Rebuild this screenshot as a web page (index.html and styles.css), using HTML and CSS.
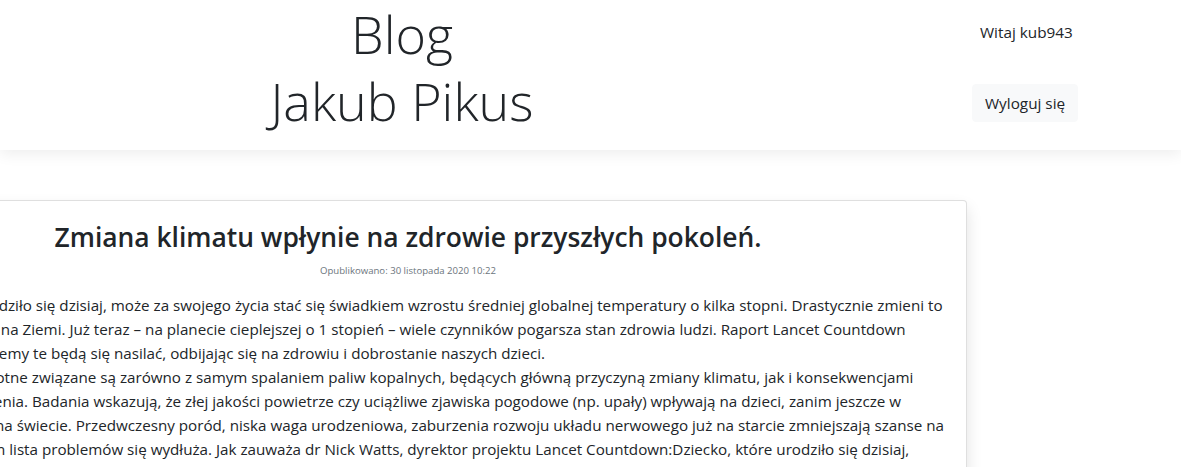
FILE: index.html
```html
<!DOCTYPE html>
<html lang="pl">
<head>
<meta charset="utf-8">
<title>Blog Jakub Pikus</title>
<link rel="stylesheet" href="styles.css">
</head>
<body>
<header class="site-header">
  <div class="brand">
    <h1 class="brand-title">Blog<br>Jakub Pikus</h1>
  </div>
  <div class="user-panel">
    <span class="greeting">Witaj kub943</span>
    <button class="btn-logout" type="button">Wyloguj się</button>
  </div>
</header>
<main class="content">
  <article class="post-card">
    <h3 class="post-title">Zmiana klimatu wpłynie na zdrowie przyszłych pokoleń.</h3>
    <p class="post-meta">Opublikowano: 30 listopada 2020 10:22</p>
    <p class="post-body">
      <span class="line">Dziecko, które urodziło się dzisiaj, może za swojego życia stać się świadkiem wzrostu średniej globalnej temperatury o kilka stopni. Drastycznie zmieni to</span>
      <span class="line">sposób życia ludzi na Ziemi. Już teraz – na planecie cieplejszej o 1 stopień – wiele czynników pogarsza stan zdrowia ludzi. Raport Lancet Countdown</span>
      <span class="line">pokazuje, że problemy te będą się nasilać, odbijając się na zdrowiu i dobrostanie naszych dzieci.</span>
      <span class="line">Zagrożenia zdrowotne związane są zarówno z samym spalaniem paliw kopalnych, będących główną przyczyną zmiany klimatu, jak i konsekwencjami</span>
      <span class="line">globalnego ocieplenia. Badania wskazują, że złej jakości powietrze czy uciążliwe zjawiska pogodowe (np. upały) wpływają na dzieci, zanim jeszcze w</span>
      <span class="line">ogóle pojawią się na świecie. Przedwczesny poród, niska waga urodzeniowa, zaburzenia rozwoju układu nerwowego już na starcie zmniejszają szanse na</span>
      <span class="line">zdrowie, i z czasem lista problemów się wydłuża. Jak zauważa dr Nick Watts, dyrektor projektu Lancet Countdown:Dziecko, które urodziło się dzisiaj,</span>
      <span class="line">może za swojego życia stać się świadkiem wzrostu średniej globalnej temperatury o kilka stopni.</span>
    </p>
  </article>
</main>
</body>
</html>
```

FILE: styles.css
```css
html, body {
  margin: 0;
  padding: 0;
  background: #fff;
}

body {
  font-family: "Open Sans", "Noto Sans", sans-serif;
  color: #212529;
  overflow: hidden;
}

.site-header {
  position: relative;
  z-index: 1;
  display: flex;
  height: 150px;
  background: #fff;
  box-shadow: 0 4px 14px rgba(0, 0, 0, 0.07);
}

.brand {
  flex: 0 0 804px;
  text-align: center;
}

.brand-title {
  margin: 0;
  font-size: 52px;
  font-weight: 300;
  line-height: 67.2px;
}

.user-panel {
  display: flex;
  flex-direction: column;
  align-items: flex-start;
  padding-top: 20px;
  margin-left: 168px;
}

.greeting {
  padding: 0 8px;
  font-size: 15.3px;
  line-height: 24px;
}

.btn-logout {
  margin-top: 40px;
  padding: 6px 12px;
  border: 1px solid #f8f9fa;
  border-radius: 4px;
  background: #f8f9fa;
  color: #212529;
  font-family: inherit;
  font-size: 15.3px;
  line-height: 24px;
}

.content {
  width: 1118px;
  margin-left: -151px;
  padding-top: 50px;
}

.post-card {
  border: 1px solid rgba(0, 0, 0, 0.125);
  border-radius: 4px;
  padding: 20px;
  background: #fff;
  box-shadow: 0 8px 16px rgba(0, 0, 0, 0.12);
}

.post-title {
  margin: 0 0 8px;
  text-align: center;
  font-size: 26.4px;
  font-weight: 600;
  line-height: 33.6px;
}

.post-meta {
  margin: 0 0 14px;
  text-align: center;
  font-size: 9.6px;
  line-height: 16px;
  color: #6c757d;
}

.post-body {
  margin: 0;
  font-size: 15.2px;
  line-height: 24px;
}

.line {
  display: block;
  white-space: nowrap;
}
```
